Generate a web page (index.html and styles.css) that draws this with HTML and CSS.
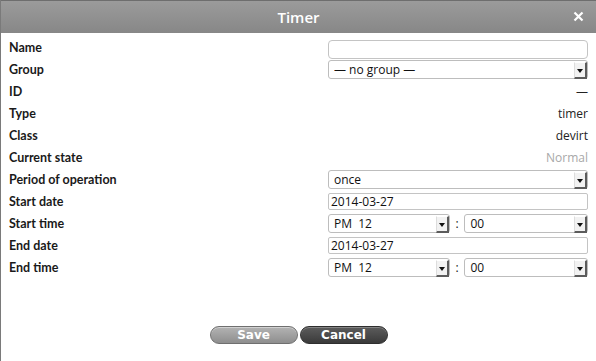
FILE: index.html
```html
<!DOCTYPE html>
<html lang="en">
<head>
    <meta charset="UTF-8">
    <title>Timer</title>
    <link rel="stylesheet" href="styles.css">
</head>
<body>
    <div class="dialog">
        <div class="title-bar">
            <span class="title">Timer</span>
            <span class="close-btn">
                <svg width="11" height="11" viewBox="0 0 11 11">
                    <path d="M1.5 1.5 L9.5 9.5 M9.5 1.5 L1.5 9.5" stroke="white" stroke-width="2.2" fill="none"/>
                </svg>
            </span>
        </div>

        <div class="form">
            <div class="row">
                <label class="label">Name</label>
                <input class="text-input" type="text" value="">
            </div>
            <div class="row">
                <label class="label">Group</label>
                <div class="select-box">
                    <select><option>— no group —</option></select>
                    <span class="arrow"></span>
                </div>
            </div>
            <div class="row">
                <label class="label">ID</label>
                <span class="value">—</span>
            </div>
            <div class="row">
                <label class="label">Type</label>
                <span class="value">timer</span>
            </div>
            <div class="row">
                <label class="label">Class</label>
                <span class="value">devirt</span>
            </div>
            <div class="row">
                <label class="label">Current state</label>
                <span class="value muted">Normal</span>
            </div>
            <div class="row">
                <label class="label">Period of operation</label>
                <div class="select-box">
                    <select><option>once</option></select>
                    <span class="arrow"></span>
                </div>
            </div>
            <div class="row">
                <label class="label">Start date</label>
                <input class="date-input" type="text" value="2014-03-27">
            </div>
            <div class="row">
                <label class="label">Start time</label>
                <div class="time-pick">
                    <div class="select-box">
                        <select><option>PM&nbsp;&nbsp;12</option></select>
                        <span class="arrow"></span>
                    </div>
                    <span class="colon">:</span>
                    <div class="select-box">
                        <select><option>00</option></select>
                        <span class="arrow"></span>
                    </div>
                </div>
            </div>
            <div class="row">
                <label class="label">End date</label>
                <input class="date-input" type="text" value="2014-03-27">
            </div>
            <div class="row">
                <label class="label">End time</label>
                <div class="time-pick">
                    <div class="select-box">
                        <select><option>PM&nbsp;&nbsp;12</option></select>
                        <span class="arrow"></span>
                    </div>
                    <span class="colon">:</span>
                    <div class="select-box">
                        <select><option>00</option></select>
                        <span class="arrow"></span>
                    </div>
                </div>
            </div>
        </div>

        <div class="buttons">
            <button class="btn btn-save">Save</button>
            <button class="btn btn-cancel">Cancel</button>
        </div>
    </div>
</body>
</html>
```

FILE: styles.css
```css
body {
    margin: 0;
    background: white;
    font-family: Lato, "Open Sans", sans-serif;
    font-size: 12px;
    color: #1a1a1a;
}

.dialog {
    height: 361px;
    border-left: 1px solid #7a7a7a;
    box-sizing: border-box;
    display: flex;
    flex-direction: column;
}

.title-bar {
    height: 33px;
    flex-shrink: 0;
    border-top: 1px solid #6e6e6e;
    box-sizing: border-box;
    background: linear-gradient(#9b9b9b, #878787);
    display: flex;
    align-items: center;
    justify-content: center;
    position: relative;
}

.title {
    color: white;
    font-size: 15px;
    font-weight: 600;
    font-family: "Open Sans", sans-serif;
}

.close-btn {
    position: absolute;
    right: 12px;
    top: 10px;
    display: flex;
}

.form {
    padding: 3px 8px 0 8px;
}

.row {
    height: 22px;
    display: flex;
    align-items: center;
    justify-content: space-between;
}

.label {
    font-weight: bold;
    font-size: 12.5px;
}

.value {
    color: #222;
    font-family: "Open Sans", sans-serif;
}

.muted {
    color: #a8a8a8;
}

.text-input {
    width: 260px;
    height: 19px;
    box-sizing: border-box;
    border: 1px solid #c4c4c4;
    border-radius: 4px;
    margin-top: 4px;
    font-family: inherit;
    font-size: 12px;
}

.date-input {
    width: 260px;
    height: 17px;
    box-sizing: border-box;
    border: 1px solid #c4c4c4;
    border-radius: 2px;
    padding: 0 2px;
    font-family: "Open Sans", sans-serif;
    font-size: 12px;
    color: #111;
}

.select-box {
    width: 260px;
    height: 19px;
    position: relative;
}

.select-box select {
    appearance: none;
    -webkit-appearance: none;
    width: 100%;
    height: 100%;
    border: 1px solid #bdbdbd;
    border-radius: 3px;
    background: white;
    padding: 0 0 0 5px;
    font-family: "Open Sans", sans-serif;
    font-size: 12px;
    color: #111;
}

/* little 3d arrow button */
.arrow {
    position: absolute;
    right: 1px;
    top: 2px;
    width: 10px;
    height: 14px;
    background: #f2f2f2;
    border-top: 1px solid #fff;
    border-left: 1px solid #ddd;
    border-right: 2px solid #5c5c5c;
    border-bottom: 2px solid #5c5c5c;
    pointer-events: none;
}

.arrow::after {
    content: "";
    position: absolute;
    left: 2px;
    top: 6px;
    border-left: 3px solid transparent;
    border-right: 3px solid transparent;
    border-top: 4px solid #111;
}

.time-pick {
    width: 260px;
    display: flex;
    align-items: center;
}

.time-pick .select-box {
    width: 122px;
}

.colon {
    width: 15px;
    text-align: center;
    font-family: "Open Sans", sans-serif;
}

.time-pick .select-box:last-child {
    width: 124px;
}

.buttons {
    margin-top: auto;
    margin-bottom: 17px;
    display: flex;
    justify-content: center;
    gap: 2px;
}

.btn {
    width: 88px;
    height: 18px;
    border-radius: 9px;
    color: white;
    font-weight: bold;
    font-size: 12px;
    font-family: "DejaVu Sans", sans-serif;
    padding: 0;
    cursor: pointer;
}

.btn-save {
    background: linear-gradient(#b3b3b3, #8e8e8e);
    border: 1px solid #6f6f6f;
    box-shadow: inset 0 1px 0 rgba(255,255,255,0.4);
}

.btn-cancel {
    background: linear-gradient(#5c5c5c, #3a3a3a);
    border: 1px solid #2e2e2e;
    box-shadow: inset 0 1px 0 rgba(255,255,255,0.25);
}
```
